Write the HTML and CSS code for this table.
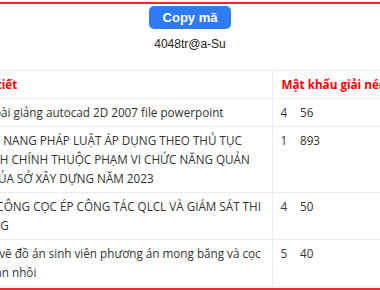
FILE: index.html
```html
<!DOCTYPE html>
<html lang="vi">
<head>
    <meta charset="UTF-8">
    <meta name="viewport" content="width=device-width, initial-scale=1.0">
    <title>Mật khẩu giải nén</title>
    <link rel="stylesheet" href="styles.css">
</head>
<body>
    <div class="panel">
        <div class="code-box">
            <button class="copy-button">Copy mã</button>
            <div class="code-text">4048tr@a-Su</div>
        </div>

        <div class="table-wrap">
            <table class="pass-table">
                <colgroup>
                    <col class="col-title">
                    <col class="col-num">
                    <col class="col-pass">
                </colgroup>
                <thead>
                    <tr>
                        <th class="cell-title">Chi tiết</th>
                        <th class="cell-head" colspan="2">Mật khẩu giải nén</th>
                    </tr>
                </thead>
                <tbody>
                    <tr>
                        <td class="cell-title">Tải bài giảng autocad 2D 2007 file powerpoint</td>
                        <td class="cell-num">4</td>
                        <td>56</td>
                    </tr>
                    <tr>
                        <td class="cell-title">CẨM NANG PHÁP LUẬT ÁP DỤNG THEO THỦ TỤC HÀNH CHÍNH THUỘC PHẠM VI CHỨC NĂNG QUẢN LÝ CỦA SỞ XÂY DỰNG NĂM 2023</td>
                        <td class="cell-num">1</td>
                        <td>893</td>
                    </tr>
                    <tr>
                        <td class="cell-title">THI CÔNG CỌC ÉP CÔNG TÁC QLCL VÀ GIÁM SÁT THI CÔNG</td>
                        <td class="cell-num">4</td>
                        <td>50</td>
                    </tr>
                    <tr>
                        <td class="cell-title">Bản vẽ đồ án sinh viên phương án mong băng và cọc khoan nhồi</td>
                        <td class="cell-num">5</td>
                        <td>40</td>
                    </tr>
                </tbody>
            </table>
        </div>
    </div>
</body>
</html>
```

FILE: styles.css
```css
body {
    margin: 0;
    background-color: #fff;
    font-family: "Open Sans", "Noto Sans", sans-serif;
    color: #333;
    overflow: hidden;
}

.panel {
    margin-top: 2px;
    border-top: 2px solid #ea2a33;
    border-bottom: 2px solid #ea2a33;
}

.code-box {
    padding-top: 1px;
    text-align: center;
}

.copy-button {
    display: inline-block;
    height: 23px;
    padding: 0 14px;
    border: none;
    border-radius: 5px;
    background-color: #2f7bf6;
    color: #fff;
    font-family: "Liberation Sans", Arial, sans-serif;
    font-size: 13px;
    font-weight: bold;
    line-height: 23px;
}

.code-text {
    margin-top: 8px;
    font-family: "Liberation Sans", Arial, sans-serif;
    font-size: 12px;
    line-height: 15px;
    color: #222;
}

.table-wrap {
    margin-top: 18px;
    padding-bottom: 1px;
    overflow: hidden;
}

.pass-table {
    width: 522px;
    margin-left: -32px;
    table-layout: fixed;
    border-collapse: collapse;
    font-size: 11.7px;
    line-height: 19px;
}

.col-title {
    width: 304px;
}

.col-num {
    width: 21px;
}

.col-pass {
    width: 197px;
}

.pass-table th,
.pass-table td {
    padding: 4px 7px;
    border-top: 1px solid #ebebeb;
    border-bottom: 1px solid #ebebeb;
    text-align: left;
    vertical-align: top;
}

.pass-table th {
    color: #f00;
    font-weight: bold;
    white-space: nowrap;
}

.pass-table .cell-title {
    border-right: 1px solid #ebebeb;
}

.pass-table .cell-head {
    padding-left: 9px;
}

.pass-table .cell-num {
    padding-left: 8px;
    padding-right: 0;
}
```
